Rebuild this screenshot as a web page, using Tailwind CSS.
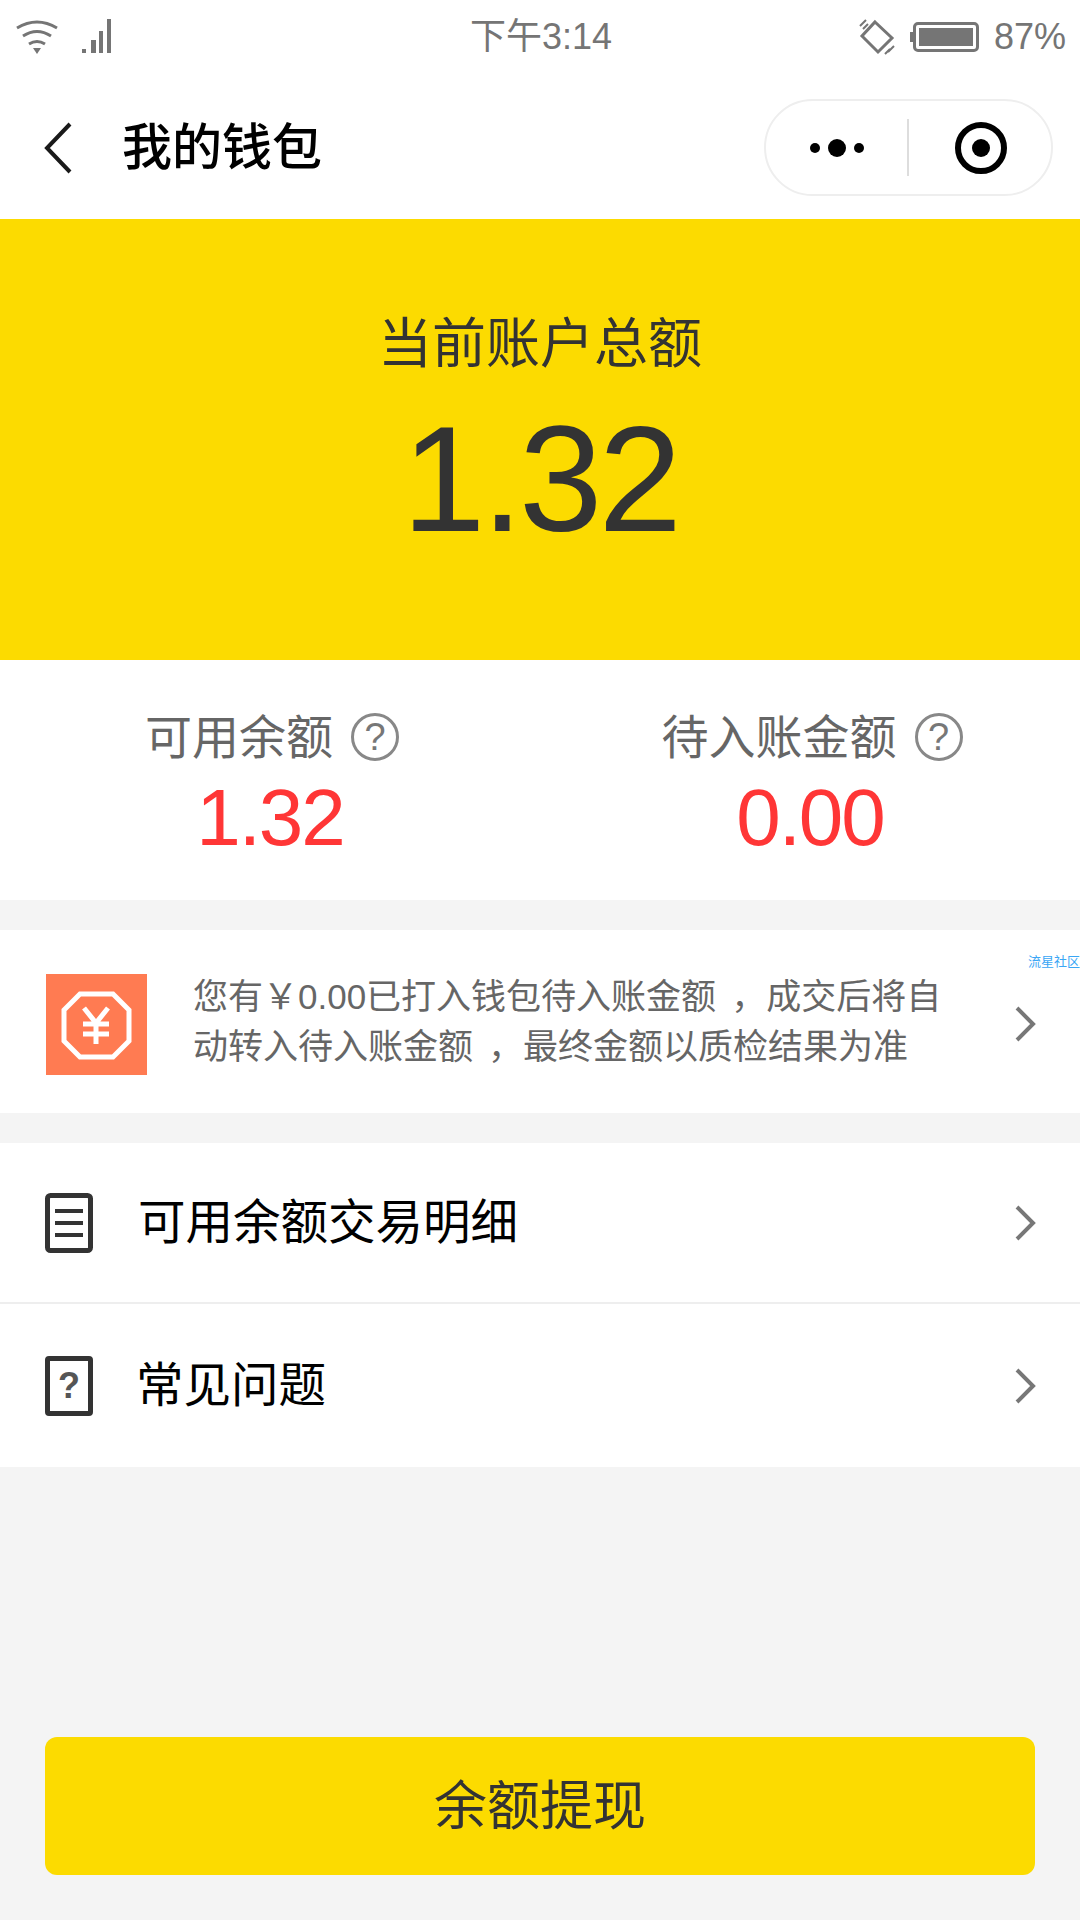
<!DOCTYPE html>
<html lang="zh-CN">
<head>
  <meta charset="UTF-8">
  <title>我的钱包</title>
  <script src="https://cdn.jsdelivr.net/npm/@tailwindcss/browser@4"></script>
</head>
<body class="w-[1080px] h-[1920px] overflow-hidden bg-[#f4f4f4] font-['Liberation_Sans','Noto_Sans_CJK_SC',sans-serif]">
<div class="flex flex-col h-[1920px]">

  <!-- Status bar -->
  <div class="h-[68px] bg-white grid grid-cols-3 items-center pt-[6px] pl-4 pr-[14px] text-[#757575]">
    <div class="flex items-center gap-[24px]">
      <svg width="42" height="36" viewBox="0 0 42 36" fill="none" stroke="#757575" stroke-width="3">
        <path d="M1 9 Q21 -3 41 9"/>
        <path d="M7 17 Q21 8 35 17"/>
        <path d="M13 25 Q21 20 29 25"/>
        <path d="M17 29 L25 29 L21 35 Z" fill="#757575" stroke="none"/>
      </svg>
      <svg width="29" height="36" viewBox="0 0 29 36" fill="#757575">
        <rect x="0" y="30" width="4" height="4"/>
        <rect x="9" y="21" width="5" height="13"/>
        <rect x="17" y="12" width="4" height="22"/>
        <rect x="25" y="0" width="4" height="34"/>
      </svg>
    </div>
    <div class="text-center text-[36px] leading-none">下午3:14</div>
    <div class="flex items-center justify-end gap-[15px]">
      <svg width="36" height="36" viewBox="0 0 36 36" fill="none" stroke="#757575" stroke-width="3">
        <path d="M16 3 L33 19 L19 33 L3 17 Z"/>
        <path d="M1 7 L7 1 M4 10 L9 5" stroke-width="2"/>
        <path d="M29 33 L35 27 M26 35 L31 30" stroke-width="2"/>
      </svg>
      <div class="flex items-center">
        <div class="w-[3px] h-[10px] bg-[#757575]"></div>
        <div class="w-[66px] h-[30px] border-[3px] border-[#757575] rounded-[5px] p-[3px] flex">
          <div class="flex-1 bg-[#757575]"></div>
        </div>
      </div>
      <span class="text-[36px] leading-none">87%</span>
    </div>
  </div>

  <!-- Nav -->
  <div class="h-[151px] bg-white flex items-center pt-[8px] pl-[44px] pr-[27px]">
    <svg width="28" height="52" viewBox="0 0 28 52" fill="none" stroke="#1a1a1a" stroke-width="4">
      <path d="M26 2 L3 26 L26 50"/>
    </svg>
    <h1 class="ml-[50px] text-[50px] leading-none text-black font-medium">我的钱包</h1>
    <div class="ml-auto w-[289px] h-[97px] border-2 border-[#eeeeee] rounded-full flex items-center">
      <div class="w-[141px] flex items-center justify-center gap-[8px]">
        <span class="w-[10px] h-[10px] rounded-full bg-black"></span>
        <span class="w-[18px] h-[18px] rounded-full bg-black"></span>
        <span class="w-[10px] h-[10px] rounded-full bg-black"></span>
      </div>
      <div class="w-[2px] h-[57px] bg-[#dddddd]"></div>
      <div class="flex-1 flex items-center justify-center pl-[2px]">
        <div class="w-[52px] h-[52px] rounded-full border-[6px] border-black flex items-center justify-center">
          <span class="w-[18px] h-[18px] rounded-full bg-black"></span>
        </div>
      </div>
    </div>
  </div>

  <!-- Total -->
  <div class="h-[441px] bg-[#fcdb00] flex flex-col items-center text-[#333333]">
    <div class="mt-[98px] text-[54px] leading-none">当前账户总额</div>
    <div class="mt-[33px] text-[150px] leading-none tracking-[-4px]">1.32</div>
  </div>

  <!-- Balances -->
  <div class="h-[240px] bg-white grid grid-cols-2">
    <div class="flex flex-col items-center pt-[53px]">
      <div class="flex items-center gap-[18px] pl-[4px] text-[47px] leading-none text-[#666666]">
        <span>可用余额</span>
        <span class="w-[48px] h-[48px] rounded-full border-[3px] border-[#888888] flex items-center justify-center text-[38px] leading-none text-[#777777]">?</span>
      </div>
      <div class="mt-[17px] text-[80px] leading-none tracking-[-2px] text-[#ff3636]">1.32</div>
    </div>
    <div class="flex flex-col items-center pt-[53px]">
      <div class="flex items-center gap-[18px] pl-[4px] text-[47px] leading-none text-[#666666]">
        <span>待入账金额</span>
        <span class="w-[48px] h-[48px] rounded-full border-[3px] border-[#888888] flex items-center justify-center text-[38px] leading-none text-[#777777]">?</span>
      </div>
      <div class="mt-[17px] text-[80px] leading-none tracking-[-2px] text-[#ff3636]">0.00</div>
    </div>
  </div>

  <!-- Notice -->
  <div class="relative mt-[30px] h-[183px] bg-white flex items-center pl-[46px] pr-[44px]">
    <svg width="101" height="101" viewBox="0 0 101 101" class="shrink-0 mt-[5px]">
      <rect width="101" height="101" fill="#ff7b52"/>
      <path d="M34 20 H67 L83 36 V67 L67 83 H34 L18 67 V36 Z" fill="none" stroke="#fff" stroke-width="5"/>
      <path d="M38 34 L50 49 L62 34 M37 50 H63 M37 60 H63 M50 49 V70" fill="none" stroke="#fff" stroke-width="5"/>
    </svg>
    <p class="ml-[46px] whitespace-nowrap text-[35px] leading-[50px] text-[#666666]">您有￥0.00已打入钱包待入账金额<span class="ml-[15px]">，</span>成交后将自<br>动转入待入账金额<span class="ml-[15px]">，</span>最终金额以质检结果为准</p>
    <svg width="22" height="36" viewBox="0 0 22 36" fill="none" stroke="#777777" stroke-width="4" class="ml-auto mt-[5px]">
      <path d="M3 2 L19 18 L3 34"/>
    </svg>
    <span class="absolute right-0 top-[25px] text-[13px] leading-none text-[#3aa6f5]">流星社区</span>
  </div>

  <!-- List -->
  <div class="mt-[30px] bg-white">
    <div class="h-[161px] border-b-2 border-[#eeeeee] flex items-center pl-[45px] pr-[44px]">
      <svg width="48" height="60" viewBox="0 0 48 60" fill="none" stroke="#333333" stroke-width="5">
        <rect x="2.5" y="2.5" width="43" height="55" rx="3"/>
        <path d="M10 18 H38 M10 30 H38 M10 42 H38" stroke-width="4"/>
      </svg>
      <span class="ml-[45px] text-[47.5px] leading-none text-black">可用余额交易明细</span>
      <svg width="22" height="36" viewBox="0 0 22 36" fill="none" stroke="#777777" stroke-width="4" class="ml-auto">
        <path d="M3 2 L19 18 L3 34"/>
      </svg>
    </div>
    <div class="h-[163px] flex items-center pl-[45px] pr-[44px]">
      <div class="w-[48px] h-[60px] border-[5px] border-[#333333] rounded-[4px] flex items-center justify-center text-[36px] font-bold leading-none text-[#555555]">?</div>
      <span class="ml-[43px] text-[47.5px] leading-none text-black">常见问题</span>
      <svg width="22" height="36" viewBox="0 0 22 36" fill="none" stroke="#777777" stroke-width="4" class="ml-auto">
        <path d="M3 2 L19 18 L3 34"/>
      </svg>
    </div>
  </div>

  <!-- Withdraw button -->
  <div class="mt-auto px-[45px] pb-[45px]">
    <button class="w-full h-[138px] rounded-[12px] bg-[#fcdb00] text-[53px] leading-none text-[#333333]">余额提现</button>
  </div>
</div>
</body>
</html>
